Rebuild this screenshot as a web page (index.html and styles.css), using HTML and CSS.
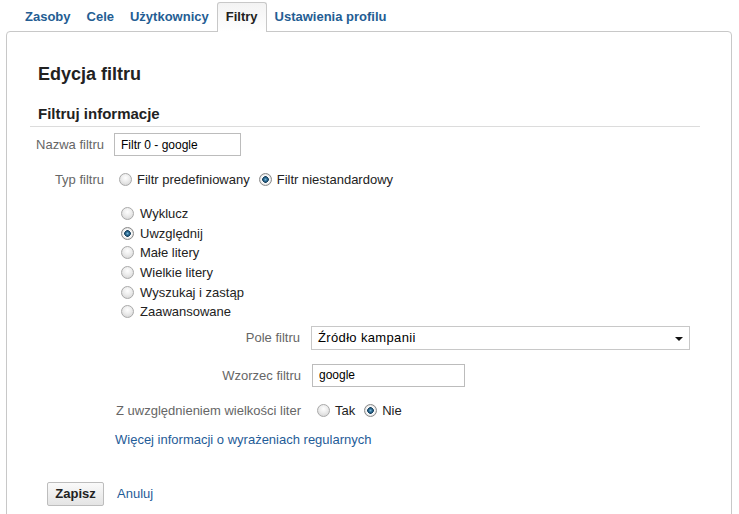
FILE: index.html
```html
<!DOCTYPE html>
<html lang="pl">
<head>
    <meta charset="UTF-8">
    <title>Edycja filtru</title>
    <link rel="stylesheet" href="styles.css">
</head>
<body>
    <ul class="tabs">
        <li><a href="#">Zasoby</a></li>
        <li><a href="#">Cele</a></li>
        <li><a href="#">Użytkownicy</a></li>
        <li class="active">Filtry</li>
        <li><a href="#">Ustawienia profilu</a></li>
    </ul>

    <div class="panel">
        <h1 class="title">Edycja filtru</h1>
        <h2 class="section-title">Filtruj informacje</h2>

        <div class="row row-name">
            <label class="label">Nazwa filtru</label>
            <input class="text-input input-name" type="text" value="Filtr 0 - google">
        </div>

        <div class="row row-type">
            <span class="label">Typ filtru</span>
            <label class="radio"><input type="radio" name="typ">Filtr predefiniowany</label>
            <label class="radio"><input type="radio" name="typ" checked>Filtr niestandardowy</label>
        </div>

        <div class="custom">
            <ul class="radio-list">
                <li><label class="radio"><input type="radio" name="rodzaj">Wyklucz</label></li>
                <li><label class="radio"><input type="radio" name="rodzaj" checked>Uwzględnij</label></li>
                <li><label class="radio"><input type="radio" name="rodzaj">Małe litery</label></li>
                <li><label class="radio"><input type="radio" name="rodzaj">Wielkie litery</label></li>
                <li><label class="radio"><input type="radio" name="rodzaj">Wyszukaj i zastąp</label></li>
                <li><label class="radio"><input type="radio" name="rodzaj">Zaawansowane</label></li>
            </ul>

            <div class="row row-field">
                <span class="label wide">Pole filtru</span>
                <span class="select">Źródło kampanii</span>
            </div>

            <div class="row row-pattern">
                <label class="label wide">Wzorzec filtru</label>
                <input class="text-input input-pattern" type="text" value="google">
            </div>

            <div class="row row-case">
                <span class="label wide">Z uwzględnieniem wielkości liter</span>
                <label class="radio"><input type="radio" name="case">Tak</label>
                <label class="radio"><input type="radio" name="case" checked>Nie</label>
            </div>

            <a class="help-link" href="#">Więcej informacji o wyrażeniach regularnych</a>
        </div>

        <div class="actions">
            <button class="button" type="button">Zapisz</button>
            <a href="#">Anuluj</a>
        </div>
    </div>
</body>
</html>
```

FILE: styles.css
```css
* { margin: 0; padding: 0; box-sizing: border-box }
body { font-family: "Liberation Sans", Arial, sans-serif; font-size: 13px; color: #222; background: #fff }
a { color: #1f5c98; text-decoration: none }

/* tabs */
.tabs { display: flex; align-items: flex-end; list-style: none; height: 31px; padding-left: 17px }
.tabs li { height: 29px; line-height: 28px; padding: 0 7px; font-weight: bold;
    border: 1px solid transparent; border-bottom: 0; border-radius: 3px 3px 0 0 }
.tabs li a { color: #245d93 }
.tabs li.active { position: relative; z-index: 1; height: 30px; margin-bottom: -1px; padding: 0 8px 1px 8px;
    border-color: #c8c8c8; background: linear-gradient(#f3f3f3, #fff); color: #222 }

/* panel */
.panel { margin: 0 7px 0 6px; min-height: 500px; border: 1px solid #c8c8c8; border-radius: 4px 4px 0 0;
    padding: 31px 31px 0 23px }
.title { font-size: 18px; line-height: 22px; font-weight: bold; padding-left: 8px; margin-bottom: 20px }
.section-title { font-size: 15px; line-height: 18px; font-weight: bold; padding: 0 0 3px 8px;
    border-bottom: 1px solid #dcdcdc }

/* form rows */
.row { display: flex; align-items: center }
.label { width: 74px; margin-right: 10px; text-align: right; color: #666 }
.label.wide { width: 186px; margin-right: 11px }
.row-name { margin-top: 6px; height: 23px }
.row-type { margin-top: 13px; height: 20px }
.row-type .radio:first-of-type { margin-left: 5px }
.row-type .radio + .radio { margin-left: 9px }

.text-input { height: 23px; border: 1px solid #bcbcbc; padding: 0 6px; font: 12px "Liberation Sans", Arial, sans-serif; color: #000 }
.input-name { width: 127px }
.input-pattern { width: 153px }

.radio { display: inline-flex; align-items: center; color: #222 }
.radio input { appearance: none; -webkit-appearance: none; width: 13px; height: 13px; margin: 0 5px 0 0;
    border: 1px solid #a9a9a9; border-radius: 50%;
    background: radial-gradient(circle at 50% 35%, #fefefe 0, #ececec 45%, #cfcfcf 100%) }
.radio input:checked { border-color: #8a8a8a;
    background: radial-gradient(circle at 50% 50%, #7fb6d8 0, #2d6f97 1.6px, #173f5c 3px, #fdfdfd 3.6px, #e9e9e9 5px, #d2d2d2 6px) }

.custom { margin-left: 85px }
.radio-list { list-style: none; margin-top: 15px; padding-left: 6px }
.radio-list li { height: 19.6px; display: flex; align-items: center }
.radio-list .radio input { margin-right: 6px }

.row-field { margin-top: 4px; margin-left: -1px; height: 24px }
.select { position: relative; width: 379px; height: 24px; line-height: 22px; padding-left: 6px;
    border: 1px solid #c8c8c8; color: #000; letter-spacing: 0.35px; background: #fff }
.select::after { content: ""; position: absolute; right: 6px; top: 10px;
    border-left: 4px solid transparent; border-right: 4px solid transparent; border-top: 4px solid #111 }

.row-pattern { margin-top: 14px; height: 23px }
.row-case { margin-top: 14px; height: 20px }
.row-case .radio:first-of-type { margin-left: 5px }
.row-case .radio + .radio { margin-left: 9px }

.help-link { display: block; margin-top: 9px; line-height: 19px }

/* buttons */
.actions { display: flex; align-items: center; margin-top: 33px; padding-left: 17px }
.button { height: 24px; width: 57px; font: bold 13px "Liberation Sans", Arial, sans-serif; color: #222;
    border: 1px solid #bdbdbd; border-radius: 2px; background: linear-gradient(#fafafa, #e4e4e4); margin-right: 13px }
```
